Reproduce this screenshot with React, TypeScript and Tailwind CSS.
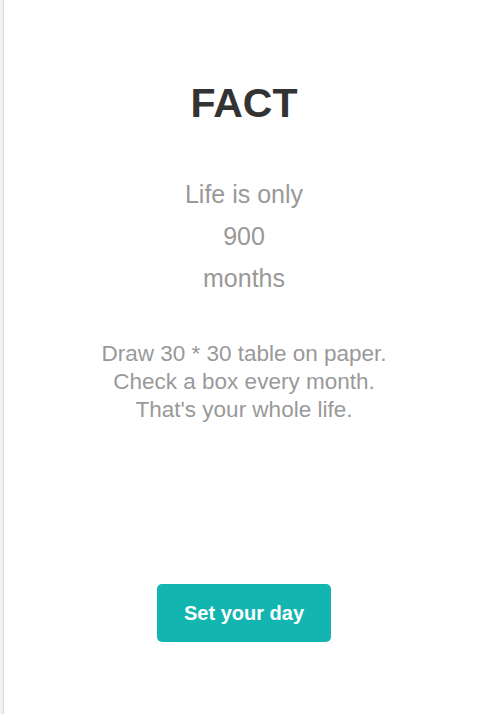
const App = () => {
  return (
    <div className="flex min-h-screen bg-white" style={{ fontFamily: '"Liberation Sans", Arial, sans-serif' }}>
      <div className="w-[4px] shrink-0 bg-[#f1f1f1] border-r border-[#dadada]" />
      <div className="flex-1 flex flex-col items-center pl-[6px] pt-[80px]">
        <h1 className="text-[41px] leading-[46px] font-bold text-[#333333]">FACT</h1>

        <div className="mt-[47px] text-center text-[25px] leading-[42px] text-[#999999]">
          <p>Life is only</p>
          <p>900</p>
          <p>months</p>
        </div>

        <div className="mt-[41px] text-center text-[22.5px] leading-[28px] text-[#999999]">
          <p>Draw 30 * 30 table on paper.</p>
          <p>Check a box every month.</p>
          <p>That's your whole life.</p>
        </div>

        <button
          type="button"
          className="mt-[160px] w-[174px] h-[58px] rounded-[5px] bg-[#13b5b0] text-white text-[20px] font-bold hover:bg-[#10a39f] transition-colors duration-200"
        >
          Set your day
        </button>
      </div>
    </div>
  );
};

export default App;
